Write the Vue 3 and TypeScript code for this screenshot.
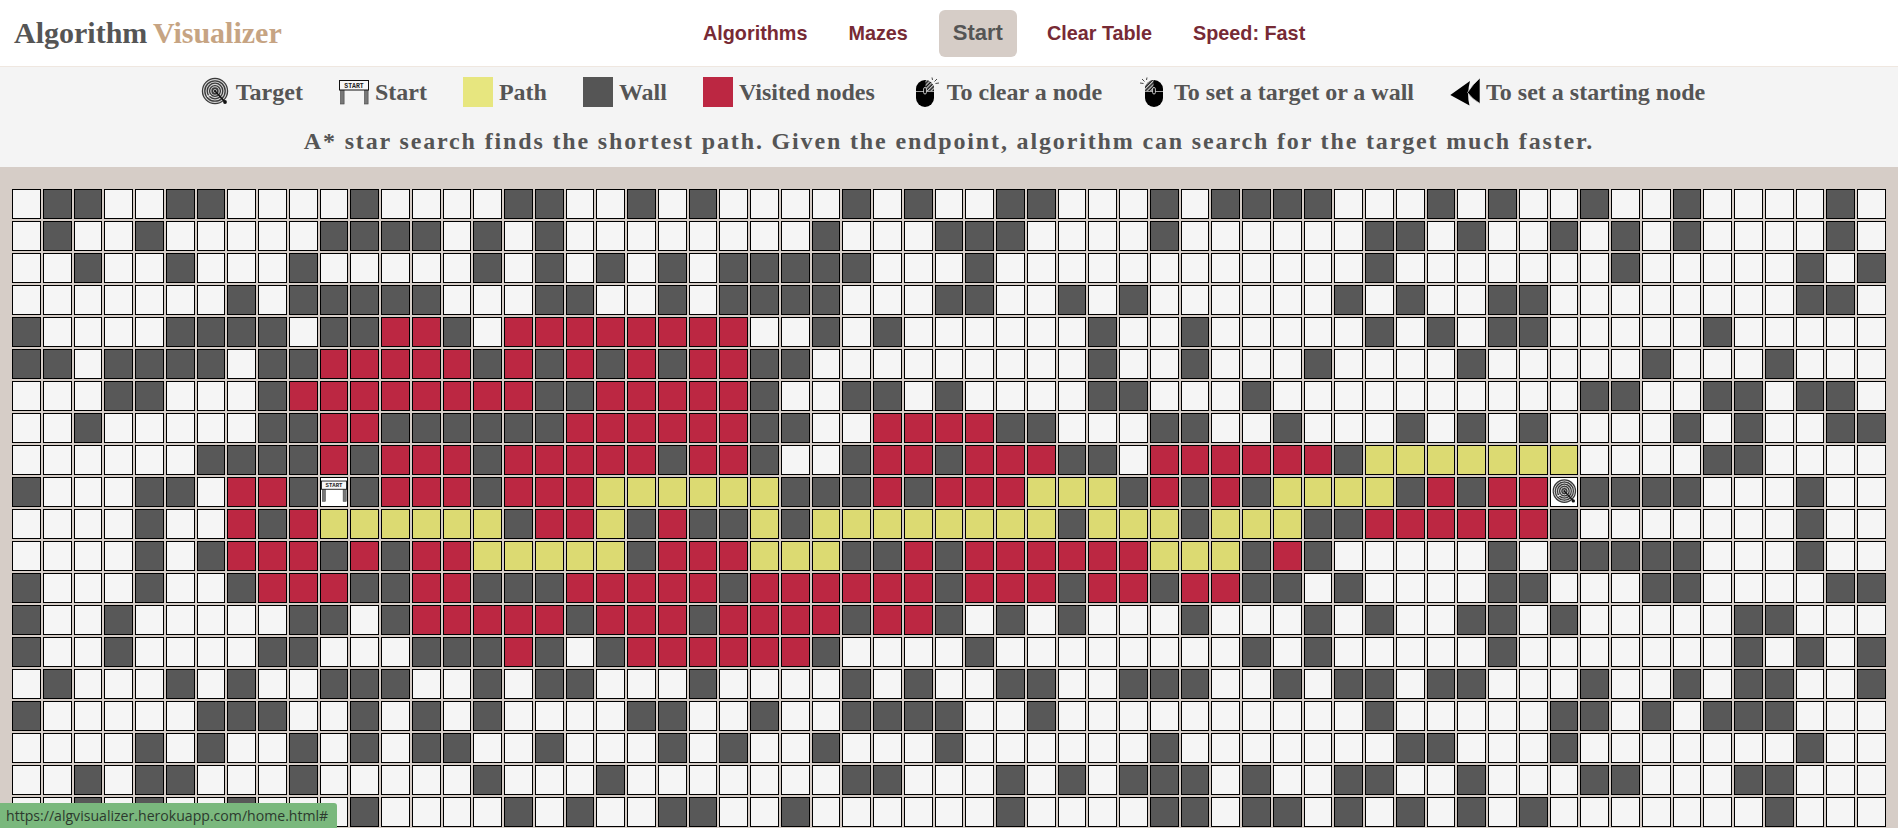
<script setup lang="ts">
const rows: string[] = [
  '.##..##...' + '.#....##..' + '#.#....#.#' + '..##...#.#' + '###...#.#.' + '.#..#....#.',
  '.#..#.....' + '####.#.#..' + '......#...' + '###....#..' + '....##.#..' + '#.#.#....#.',
  '..#..#...#' + '.....#.#.#' + '.#.#####..' + '.#........' + '....#.....' + '..#.....#.#',
  '.......#.#' + '####...##.' + '.#.####...' + '##..#.#...' + '...#.#..##' + '........##.',
  '#....####.' + '##vv#.vvvv' + 'vvvv..#.#.' + '.....#..#.' + '....#.#.##' + '.....#.....',
  '##.####.##' + 'vvvvv#v#v#' + 'v#vv##....' + '.....#..#.' + '..#....#..' + '...#...#...',
  '...##...#v' + 'vvvvvvv##v' + 'vvvv#..##.' + '#....##...' + '#.........' + '.##..##.##.',
  '..#.....##' + 'vv######vv' + 'vvvv##..vv' + 'vv##...##.' + '.#...#.#.#' + '....#.#..##',
  '......####' + 'v#vvv#vvvv' + 'v#vv#..#vv' + '#vvv##.vvv' + 'vvv#pppppp' + 'p....##....',
  '#...##.vv#' + 'S#vvv#vvvp' + 'ppppp###v#' + 'vvvppp#v#v' + '#pppp#v#vv' + 'T####...#..',
  '....#..v#v' + 'pppppp#vvp' + '#v##p#pppp' + 'pppp#ppp#p' + 'pp##vvvvvv' + '#.......#..',
  '....#.#vvv' + '#v#vvppppp' + '#vvvppp##v' + '#vvvvvvppp' + '#v#.....#.' + '#####...#..',
  '#...#..#vv' + 'v##vv###vv' + 'vvv#vvvvvv' + '#vvv#vv#vv' + '##.#....##' + '...##....##',
  '#..#.....#' + '#.#vvvvv#v' + 'vv#vvvv#vv' + '#.#.#...#.' + '..#.#..##.' + '#.....##...',
  '#..#....##' + '...###v#.#' + 'vvvvvv#...' + '.#........' + '#.#.....#.' + '......#.#.#',
  '.#...#.#..' + '###..#.##.' + '..#....#.#' + '..##..###.' + '.#.##.##..' + '.#..#.##..#',
  '#.....###.' + '.#.#.#....' + '##..#..###' + '#..#......' + '....#.....' + '##.#.###...',
  '....#.#..#' + '.#.##..#..' + '.#.#..#...' + '#......#..' + '.....##...' + '#.......#..',
  '..#.##...#' + '.....#...#' + '.......##.' + '..#.#.###.' + '#..##..#..' + '.##...##...',
  '..#.#..#..' + '.#....#.#.' + '.##..#....' + '..#....##.' + '##.#.#.#.#' + '.......#...',
]

const kinds: Record<string, string> = {
  '.': 'empty',
  '#': 'wall',
  v: 'visited',
  p: 'path',
  S: 'start',
  T: 'target',
}

const cells = rows.flatMap((row) => row.split('').map((ch) => kinds[ch]))

const navItems = ['Algorithms', 'Mazes', 'Start', 'Clear Table', 'Speed: Fast']

interface LegendItem {
  label: string
  icon?: string
  swatch?: string
}

const legend: LegendItem[] = [
  { label: 'Target', icon: 'ic-target' },
  { label: 'Start', icon: 'ic-start' },
  { label: 'Path', swatch: 'path' },
  { label: 'Wall', swatch: 'wall' },
  { label: 'Visited nodes', swatch: 'visited' },
  { label: 'To clear a node', icon: 'ic-mouse-right' },
  { label: 'To set a target or a wall', icon: 'ic-mouse-left' },
  { label: 'To set a starting node', icon: 'ic-arrows' },
]
</script>

<template>
  <svg class="sprite" aria-hidden="true">
    <defs>
      <pattern id="hatch" width="2.6" height="2.6" patternUnits="userSpaceOnUse" patternTransform="rotate(45)">
        <rect width="2.6" height="2.6" fill="#111" />
        <rect width="1.3" height="2.6" fill="#c4c4c4" />
      </pattern>
      <symbol id="ic-target" viewBox="0 0 30 30">
        <circle cx="15" cy="14" r="13.2" fill="#3a3a3a" />
        <circle cx="15" cy="14" r="11.4" fill="none" stroke="#d4d4d4" stroke-width="1.1" />
        <circle cx="15" cy="14" r="9" fill="none" stroke="#d4d4d4" stroke-width="1.1" />
        <circle cx="15" cy="14" r="6.6" fill="none" stroke="#d4d4d4" stroke-width="1.1" />
        <circle cx="15" cy="14" r="4.2" fill="none" stroke="#d4d4d4" stroke-width="1.1" />
        <circle cx="15" cy="14" r="1.6" fill="#222" stroke="#ddd" stroke-width=".7" />
        <path d="M15 14 L25 25" stroke="#111" stroke-width="1.4" />
        <path d="M7 19.5 L11 18.3" stroke="#f2f2f2" stroke-width="1.2" />
        <circle cx="25" cy="25" r="1.9" fill="#111" />
      </symbol>
      <symbol id="ic-start" viewBox="0 0 30 30">
        <rect x="1.5" y="11" width="3.6" height="16" fill="#777" stroke="#444" stroke-width=".6" />
        <rect x="25.5" y="11" width="3.6" height="16" fill="#777" stroke="#444" stroke-width=".6" />
        <rect x=".5" y="3.5" width="29" height="9.5" fill="#f8f8f8" stroke="#111" stroke-width="1" />
        <text x="15" y="10.6" class="sign-text">START</text>
      </symbol>
      <symbol id="ic-mouse-right" viewBox="0 0 30 30">
        <rect x="5" y="3" width="18" height="27" rx="9" fill="#000" />
        <path d="M14.5 3.1 A9 9 0 0 1 23 12 V14 H14.5 Z" fill="url(#hatch)" />
        <path d="M5 14.5 H23" stroke="#ccc" stroke-width=".8" />
        <rect x="12.6" y="10.5" width="2.8" height="6.5" rx="1.4" fill="#000" stroke="#eee" stroke-width=".8" />
        <path d="M23.5 4.5 L26 2 M24.5 6.5 L28 6 M21.5 3 L21 .5" stroke="#333" stroke-width=".9" />
      </symbol>
      <symbol id="ic-mouse-left" viewBox="0 0 30 30">
        <rect x="7" y="3" width="18" height="27" rx="9" fill="#000" />
        <path d="M15.5 3.1 A9 9 0 0 0 7 12 V14 H15.5 Z" fill="url(#hatch)" />
        <path d="M7 14.5 H25" stroke="#ccc" stroke-width=".8" />
        <rect x="14.6" y="10.5" width="2.8" height="6.5" rx="1.4" fill="#000" stroke="#eee" stroke-width=".8" />
        <path d="M6.5 4.5 L4 2 M5.5 6.5 L2 6 M8.5 3 L9 .5" stroke="#333" stroke-width=".9" />
      </symbol>
      <symbol id="ic-arrows" viewBox="0 0 30 30">
        <path d="M.3 18 L20 4 Q16.5 17 19.5 28.5 Z" fill="#000" />
        <path d="M17.5 15.5 Q23 7 30 1 V26.5 Q22 22 17.5 15.5 Z" fill="#000" stroke="#f4f4f4" stroke-width=".6" />
      </symbol>
    </defs>
  </svg>

  <div class="page">
    <header class="topbar">
      <h1 class="brand">Algorithm <span class="brand-accent">Visualizer</span></h1>
      <nav class="nav">
        <a
          v-for="item in navItems"
          :key="item"
          href="#"
          class="nav-link"
          :class="{ 'nav-link-active': item === 'Start' }"
        >{{ item }}</a>
      </nav>
    </header>

    <section class="legend">
      <ul class="legend-row">
        <li v-for="item in legend" :key="item.label" class="legend-item">
          <svg v-if="item.icon" class="legend-icon"><use :href="'#' + item.icon" /></svg>
          <span v-else class="legend-swatch" :class="'swatch-' + item.swatch"></span>
          <span>{{ item.label }}</span>
        </li>
      </ul>
      <p class="legend-note">A* star search finds the shortest path. Given the endpoint, algorithm can search for the target much faster.</p>
    </section>

    <main class="board">
      <div class="grid">
        <div v-for="(kind, i) in cells" :key="i" class="cell" :class="'cell-' + kind">
          <svg v-if="kind === 'start'" class="cell-start-icon"><use href="#ic-start" /></svg>
          <svg v-else-if="kind === 'target'" class="cell-target-icon"><use href="#ic-target" /></svg>
        </div>
      </div>
    </main>
  </div>

  <div class="status">https://algvisualizer.herokuapp.com/home.html#</div>
</template>

<style>
html,
body {
  height: 100%;
  overflow: hidden;
}
</style>

<style scoped>
.sprite {
  position: absolute;
  width: 0;
  height: 0;
}
.sign-text {
  font-family: "Liberation Mono", monospace;
  font-size: 6.5px;
  font-weight: 700;
  text-anchor: middle;
  fill: #222;
}
.page {
  height: 828px;
  overflow: hidden;
  background: #d6cdc7;
}
.topbar {
  display: flex;
  align-items: center;
  height: 66px;
  padding-left: 14px;
  background: #fff;
  border-bottom: 1px solid #efe7e0;
}
.brand {
  margin: 0;
  width: 669px;
  font-family: "Liberation Serif", serif;
  font-size: 30px;
  font-weight: 700;
  word-spacing: -1.4px;
  color: #555;
}
.brand-accent {
  color: #c6a483;
}
.nav {
  display: flex;
  align-items: center;
  gap: 1px;
}
.nav-link {
  padding: 0 20px;
  font-family: "Liberation Sans", sans-serif;
  font-size: 19.8px;
  font-weight: 700;
  color: #772a35;
  text-decoration: none;
}
.nav-link-active {
  margin: 0 9px 0 10px;
  padding: 10.5px 14px;
  border-radius: 6px;
  background: #d6cdc7;
  font-size: 22px;
  color: #555;
}
.legend {
  display: flex;
  flex-direction: column;
  align-items: center;
  height: 100px;
  padding-top: 10px;
  box-sizing: border-box;
  background: #f4f4f4;
  font-family: "Liberation Serif", serif;
  font-weight: 700;
  color: #555;
}
.legend-row {
  display: flex;
  gap: 36px;
  margin: 0;
  padding: 0 0 0 7px;
  list-style: none;
  font-size: 24px;
}
.legend-item {
  display: flex;
  align-items: center;
  gap: 6px;
  height: 30px;
}
.legend-icon {
  width: 30px;
  height: 30px;
}
.legend-swatch {
  width: 30px;
  height: 30px;
}
.swatch-path {
  background: #e7e67f;
}
.swatch-wall {
  background: #555;
}
.swatch-visited {
  background: #bc2742;
}
.legend-note {
  margin: 21px 0 0;
  font-size: 24px;
  letter-spacing: 1.85px;
  line-height: 26px;
}
.board {
  padding: 20px 10px 0;
}
.grid {
  display: grid;
  grid-template-columns: repeat(61, 1fr);
  grid-auto-rows: 30px;
  gap: 2px;
  padding: 2px;
}
.cell {
  box-sizing: border-box;
  border: 1px solid #000;
  overflow: hidden;
}
.cell-empty {
  background: #f5f5f5;
}
.cell-wall {
  background: #585858;
}
.cell-visited {
  background: #bc2742;
}
.cell-path {
  background: #dcda72;
}
.cell-start,
.cell-target {
  display: flex;
  justify-content: center;
  background: #fff;
}
.cell-start-icon {
  width: 26px;
  height: 26px;
}
.cell-target-icon {
  width: 28px;
  height: 28px;
}
.status {
  position: fixed;
  left: 0;
  bottom: 0;
  box-sizing: border-box;
  width: 337px;
  height: 25px;
  padding-left: 6px;
  border-top-right-radius: 3px;
  background: #7ab87d;
  font-family: "Open Sans", sans-serif;
  font-size: 14.1px;
  line-height: 25px;
  color: #2c3a2e;
  white-space: nowrap;
  overflow: hidden;
}
</style>
